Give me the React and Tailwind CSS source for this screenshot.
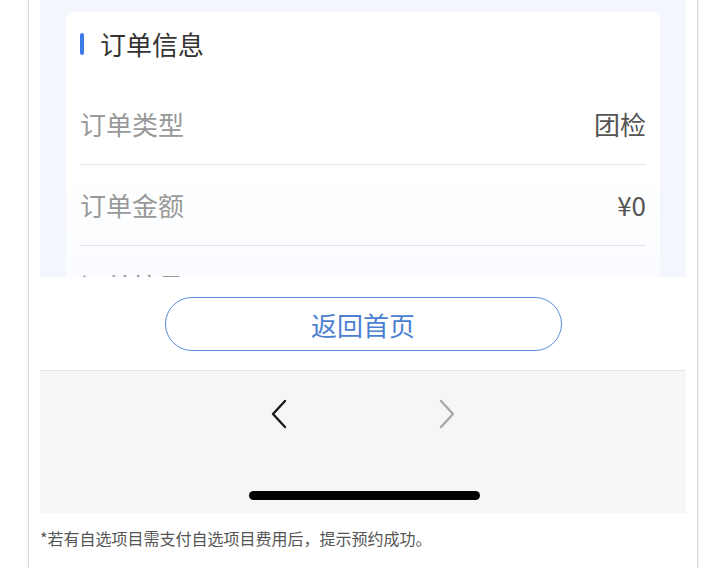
export default function App() {
  const rows = [
    { label: '订单类型', value: '团检' },
    { label: '订单金额', value: '¥0' },
    { label: '订单编号', value: 'HT20241108100000280974' },
  ]

  return (
    <div
      className="h-[568px] w-[726px] overflow-hidden bg-white"
      style={{ fontFamily: '"Noto Sans CJK SC", "Noto Sans", sans-serif' }}
    >
      <div className="ml-[28px] h-full w-[670px] border-x border-[#dcdcdc] bg-white px-[11px] shadow-[0_0_3px_rgba(0,0,0,0.12)]">
        {/* Screenshot of result page */}
        <div className="h-[277px] overflow-hidden bg-[#f3f6fd] px-[26px] pt-[12px]">
          <div className="rounded-t-[8px] bg-gradient-to-b from-white via-white to-[#f8faff] px-[14px]">
            <div className="flex h-[72px] items-start pt-[19px]">
              <span className="mr-[16px] mt-[2px] h-[22px] w-[4px] rounded-full bg-[#3b7be8]" />
              <span className="text-[26px] leading-[26px] text-[#333]">订单信息</span>
            </div>
            {rows.map((row) => (
              <div
                key={row.label}
                className="flex h-[81px] items-center justify-between gap-[20px] border-b-[1.5px] border-[#e3e5ea] text-[26px] leading-none"
              >
                <span className="shrink-0 text-[#999]">{row.label}</span>
                <span className="whitespace-nowrap text-[#555]">{row.value}</span>
              </div>
            ))}
          </div>
        </div>

        {/* Button */}
        <div className="flex h-[93px] items-center justify-center">
          <button className="flex h-[54px] w-[397px] items-center justify-center rounded-full border-[1.5px] border-[#5a8ad8] pt-[3px] text-[26px] leading-none text-[#4a7fd2]">
            返回首页
          </button>
        </div>

        {/* Browser bar */}
        <div className="relative h-[143px] border-t border-[#e6e6e6] bg-[#f6f6f6]">
          <div className="flex justify-center gap-[150px] pt-[28px]">
            <svg width="18" height="30" viewBox="0 0 18 30" fill="none">
              <path d="M15 2 L3 15 L15 28" stroke="#1a1a1a" strokeWidth="2.4" strokeLinecap="round" strokeLinejoin="round" />
            </svg>
            <svg width="18" height="30" viewBox="0 0 18 30" fill="none">
              <path d="M3 2 L15 15 L3 28" stroke="#a8a8a8" strokeWidth="2.4" strokeLinecap="round" strokeLinejoin="round" />
            </svg>
          </div>
          <div className="absolute left-[209px] top-[120px] h-[9px] w-[231px] rounded-full bg-black" />
        </div>

        {/* Footnote */}
        <p className="pt-[15px] text-[16px] leading-[20px] text-[#555]">
          *若有自选项目需支付自选项目费用后，提示预约成功。
        </p>
      </div>
    </div>
  )
}
